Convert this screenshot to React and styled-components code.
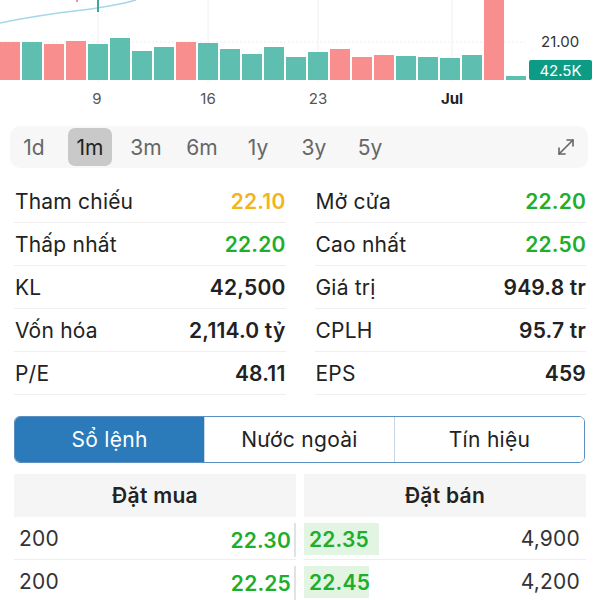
import { useState } from "react";
import styled, { createGlobalStyle } from "styled-components";
import { MoveDiagonal } from "lucide-react";

const GlobalStyle = createGlobalStyle`
  body {
    margin: 0;
    background: #fff;
    font-family: Inter, "Noto Sans", "Liberation Sans", sans-serif;
    color: #222;
  }
`;

const RED = "#f98e8e";
const TEAL = "#5ebfb1";
const GREEN = "#1fae2c";
const GOLD = "#f1b41c";

// volume bars: [top, color]
const bars = [
  [42, RED], [42, TEAL], [44, RED], [41, RED], [44, TEAL], [38, TEAL],
  [51, TEAL], [47, TEAL], [42, RED], [43, TEAL], [49, TEAL], [54, TEAL],
  [47, TEAL], [57, TEAL], [52, TEAL], [49, RED], [57, RED], [55, RED],
  [56, TEAL], [57, TEAL], [58, TEAL], [55, TEAL], [0, RED], [76, TEAL],
];

const axisLabels = [
  { text: "9", x: 97 },
  { text: "16", x: 208 },
  { text: "23", x: 318 },
  { text: "Jul", x: 452, bold: true },
];

const periods = ["1d", "1m", "3m", "6m", "1y", "3y", "5y"];

const stats = [
  ["Tham chiếu", "22.10", GOLD],
  ["Mở cửa", "22.20", GREEN],
  ["Thấp nhất", "22.20", GREEN],
  ["Cao nhất", "22.50", GREEN],
  ["KL", "42,500"],
  ["Giá trị", "949.8 tr"],
  ["Vốn hóa", "2,114.0 tỷ"],
  ["CPLH", "95.7 tr"],
  ["P/E", "48.11"],
  ["EPS", "459"],
];

const tabs = ["Sổ lệnh", "Nước ngoài", "Tín hiệu"];

const orders = [
  { buyVol: "200", buy: "22.30", sell: "22.35", sellVol: "4,900", bar: 70 },
  { buyVol: "200", buy: "22.25", sell: "22.45", sellVol: "4,200", bar: 60 },
];

// Styles
const Page = styled.div`
  width: 600px;
  height: 600px;
  overflow: hidden;
`;

const ChartBox = styled.div`
  position: relative;
  height: 112px;
`;

const AxisLabel = styled.span`
  position: absolute;
  top: 89px;
  transform: translateX(-50%);
  font-size: 15px;
  color: ${(p) => (p.$bold ? "#222" : "#555")};
  font-weight: ${(p) => (p.$bold ? 700 : 400)};
`;

const PriceLabel = styled.span`
  position: absolute;
  left: 541px;
  top: 32px;
  font-size: 15px;
  color: #333;
`;

const VolumeBadge = styled.span`
  position: absolute;
  left: 529px;
  top: 60px;
  width: 63px;
  height: 20px;
  border-radius: 2px;
  background: #0c9b84;
  color: #fff;
  font-size: 15px;
  display: flex;
  align-items: center;
  justify-content: center;
`;

const PeriodBar = styled.div`
  margin: 14px 12px 0 10px;
  height: 42px;
  padding: 0 2px;
  background: #f7f7f7;
  border-radius: 10px;
  display: flex;
  align-items: center;
  gap: 12px;
`;

const PeriodChip = styled.div`
  width: 44px;
  height: 38px;
  border-radius: 7px;
  display: flex;
  align-items: center;
  justify-content: center;
  font-size: 21px;
  color: ${(p) => (p.$active ? "#222" : "#666")};
  background: ${(p) => (p.$active ? "#c9c9c9" : "transparent")};
`;

const ExpandButton = styled.div`
  margin-left: auto;
  margin-right: 8px;
  display: flex;
  color: #666;
`;

const StatsGrid = styled.div`
  margin-top: 12px;
  padding: 0 14px;
  display: grid;
  grid-template-columns: 1fr 1fr;
  column-gap: 29px;
`;

const StatRow = styled.div`
  height: 42px;
  border-bottom: 1px solid #efefef;
  display: flex;
  align-items: center;
  justify-content: space-between;
  font-size: 21px;
  letter-spacing: 0.2px;
`;

const StatLabel = styled.span`
  color: #222;
  padding-left: 1px;
`;

const StatValue = styled.span`
  font-weight: 600;
  color: ${(p) => p.$color || "#222"};
`;

const Tabs = styled.div`
  margin: 21px 15px 0 14px;
  height: 45px;
  border: 1px solid #5a90c0;
  border-radius: 6px;
  display: flex;
  overflow: hidden;
`;

const Tab = styled.div`
  flex: 1;
  display: flex;
  align-items: center;
  justify-content: center;
  font-size: 21px;
  letter-spacing: 0.3px;
  color: ${(p) => (p.$active ? "#fff" : "#222")};
  background: ${(p) => (p.$active ? "#2b7bba" : "#fff")};
  & + & {
    border-left: 1px solid #c8d6e3;
  }
`;

const Book = styled.div`
  margin: 11px 14px 0 14px;
  display: grid;
  grid-template-columns: 1fr 1fr;
  column-gap: 8px;
`;

const BookHead = styled.div`
  height: 43px;
  background: #f5f5f5;
  display: flex;
  align-items: center;
  justify-content: center;
  font-size: 21px;
  font-weight: 600;
  letter-spacing: 0.3px;
  color: #222;
`;

const BookRow = styled.div`
  height: 42px;
  border-bottom: 1px solid #eee;
  display: flex;
  align-items: center;
  justify-content: space-between;
  font-size: 21px;
  letter-spacing: 0.2px;
`;

const BuyRow = styled(BookRow)`
  padding-left: 5px;
`;

const SellRow = styled(BookRow)`
  padding-right: 6px;
`;

const Volume = styled.span`
  color: #333;
`;

const BuyPrice = styled.span`
  font-weight: 600;
  color: ${GREEN};
  align-self: stretch;
  display: flex;
  align-items: center;
  padding-right: 3px;
  margin: 6px 0 2px;
  border-right: 2px solid #e2e2e2;
`;

const SellPrice = styled.span`
  font-weight: 600;
  color: ${GREEN};
  align-self: stretch;
  display: flex;
  align-items: center;
  padding-left: 5px;
  margin: 6px 0 4px;
  background: #e2f4e2;
  white-space: nowrap;
`;

function Chart() {
  return (
    <ChartBox>
      <svg width="600" height="82" viewBox="0 0 600 82">
        {[98, 208, 318, 452].map((x) => (
          <line key={x} x1={x} y1="0" x2={x} y2="82" stroke="#f0f0f0" />
        ))}
        <line x1="0" y1="42" x2="525" y2="42" stroke="#eeeeee" strokeDasharray="2 2" />
        <path d="M0 23 C 40 14, 70 12, 97 8 S 125 3, 136 0" fill="none" stroke="#a6d6e8" strokeWidth="1.5" />
        <rect x="76" y="0" width="2" height="2" fill={RED} />
        <rect x="97" y="0" width="2" height="12" fill="#3ba998" />
        {bars.map(([top, color], i) => (
          <rect key={i} x={i * 22} y={top} width="20" height={80 - top} fill={color} />
        ))}
      </svg>
      {axisLabels.map((l) => (
        <AxisLabel key={l.text} $bold={l.bold} style={{ left: l.x }}>
          {l.text}
        </AxisLabel>
      ))}
      <PriceLabel>21.00</PriceLabel>
      <VolumeBadge>42.5K</VolumeBadge>
    </ChartBox>
  );
}

export default function App() {
  const [period, setPeriod] = useState("1m");
  const [tab, setTab] = useState("Sổ lệnh");

  return (
    <Page>
      <GlobalStyle />
      <Chart />

      <PeriodBar>
        {periods.map((p) => (
          <PeriodChip key={p} $active={p === period} onClick={() => setPeriod(p)}>
            {p}
          </PeriodChip>
        ))}
        <ExpandButton>
          <MoveDiagonal size={24} strokeWidth={1.6} />
        </ExpandButton>
      </PeriodBar>

      <StatsGrid>
        {stats.map(([label, value, color]) => (
          <StatRow key={label}>
            <StatLabel>{label}</StatLabel>
            <StatValue $color={color}>{value}</StatValue>
          </StatRow>
        ))}
      </StatsGrid>

      <Tabs>
        {tabs.map((t) => (
          <Tab key={t} $active={t === tab} onClick={() => setTab(t)}>
            {t}
          </Tab>
        ))}
      </Tabs>

      <Book>
        <BookHead>Đặt mua</BookHead>
        <BookHead>Đặt bán</BookHead>
        {orders.map((o, i) => [
          <BuyRow key={`b${i}`}>
            <Volume>{o.buyVol}</Volume>
            <BuyPrice>{o.buy}</BuyPrice>
          </BuyRow>,
          <SellRow key={`s${i}`}>
            <SellPrice style={{ width: o.bar }}>{o.sell}</SellPrice>
            <Volume>{o.sellVol}</Volume>
          </SellRow>,
        ])}
      </Book>
    </Page>
  );
}
